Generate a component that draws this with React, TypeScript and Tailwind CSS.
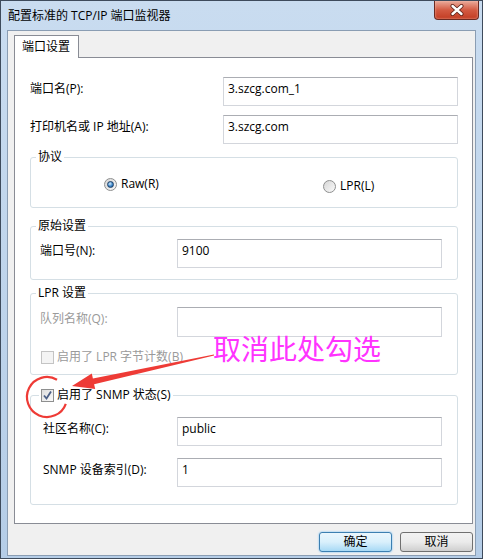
function TextBox({ value, h = "h-[29px]" }: { value?: string; h?: string }) {
  return (
    <div
      className={`${h} flex-1 border border-[#d3d6dc] border-t-[#abadb3] bg-white pl-[4px] pt-[4px] text-[12px] leading-[14px] text-black`}
    >
      {value}
    </div>
  );
}

function CheckBox({ checked, disabled }: { checked?: boolean; disabled?: boolean }) {
  return (
    <span
      className={`flex h-[13px] w-[13px] shrink-0 items-center justify-center border ${
        disabled ? "border-[#c4c4c4] bg-[#f4f4f4]" : "border-[#8e8f8f] bg-linear-to-br from-[#dcdcdc] to-[#fbfbfb]"
      }`}
    >
      {checked && (
        <svg width="11" height="11" viewBox="0 0 11 11">
          <path d="M2 5.5 L4.5 8.5 L9 1.5" fill="none" stroke="#4b5f86" strokeWidth="1.8" />
        </svg>
      )}
    </span>
  );
}

function Radio({ checked }: { checked?: boolean }) {
  return (
    <span className="flex h-[13px] w-[13px] shrink-0 items-center justify-center rounded-full border border-[#8e8f8f] bg-linear-to-br from-[#d6d6d6] to-[#fafafa]">
      {checked && (
        <span className="h-[7px] w-[7px] rounded-full border border-[#1e3f66] bg-[radial-gradient(circle_at_40%_35%,#d6eeff,#3d86c8_55%,#1a4e86)]" />
      )}
    </span>
  );
}

function Legend({ children }: { children: React.ReactNode }) {
  return <legend className="ml-[5px] px-[2px] text-[12px] leading-[14px] text-black">{children}</legend>;
}

function Button({ label, primary }: { label: string; primary?: boolean }) {
  return (
    <div
      className={`flex h-[20px] w-[73px] items-center justify-center rounded-[3px] border text-[12px] leading-[14px] text-black ${
        primary
          ? "border-[#3c7fb1] bg-linear-to-b from-[#eaf6fd] via-[#d9f0fc] to-[#a7d9f5] shadow-[0_0_2px_#5cb6f5]"
          : "border-[#707070] bg-linear-to-b from-[#f2f2f2] via-[#ebebeb] to-[#cfcfcf]"
      }`}
    >
      {label}
    </div>
  );
}

export default function App() {
  return (
    <div className="relative flex h-[559px] w-[483px] flex-col overflow-hidden border border-[#3e4b5c] bg-linear-to-b from-[#c9dcf0] to-[#b5cde7] font-['Open_Sans','Noto_Sans_CJK_SC',sans-serif]">
      {/* title bar */}
      <div className="flex h-[29px] items-start justify-between pl-[7px]">
        <span className="pt-[8px] text-[12px] leading-[14px] text-black">配置标准的 TCP/IP 端口监视器</span>
        <div className="mr-[3px] flex h-[19px] w-[45px] items-center justify-center rounded-b-[4px] border border-t-0 border-[#6b2a22] bg-linear-to-b from-[#e9a99a] via-[#d35a42] to-[#c23b22] shadow-[inset_0_0_2px_#f6c0b0]">
          <svg width="14" height="12" viewBox="0 0 14 12">
            <path d="M2.5 2 L11.5 10 M11.5 2 L2.5 10" stroke="#5a1e14" strokeWidth="4" strokeLinecap="round" />
            <path d="M2.5 2 L11.5 10 M11.5 2 L2.5 10" stroke="#ffffff" strokeWidth="2.4" strokeLinecap="round" />
          </svg>
        </div>
      </div>

      {/* client area */}
      <div className="mx-[6px] mb-[2px] flex flex-1 flex-col border border-[#8a9db3] bg-[#f0f0f0] pl-[6px] pt-[4px]">
        <div className="relative z-10 -mb-px flex h-[23px] w-[65px] border border-b-0 border-[#898c95] bg-white pl-[7px] pt-[4px] text-[12px] leading-[14px] text-black">
          端口设置
        </div>
        <div className="flex h-[467px] w-[459px] flex-col border border-[#898c95] bg-white pl-[15px] pr-[14px] pt-[19px] text-[12px] leading-[14px] text-black">
          <div className="flex items-start">
            <div className="w-[193px] pt-[5px]">端口名(P):</div>
            <TextBox value="3.szcg.com_1" />
          </div>
          <div className="mt-[9px] flex items-start">
            <div className="w-[193px] pt-[5px]">打印机名或 IP 地址(A):</div>
            <TextBox value="3.szcg.com" />
          </div>

          <fieldset className="mt-[6px] h-[58px] rounded-[3px] border border-[#d5dfe5]">
            <Legend>协议</Legend>
            <div className="mt-[12px] flex h-[16px] items-center pl-[73px]">
              <div className="flex w-[219px] items-center gap-[4px]">
                <Radio checked />
                <span>Raw(R)</span>
              </div>
              <div className="mt-[4px] flex items-center gap-[4px]">
                <Radio />
                <span>LPR(L)</span>
              </div>
            </div>
          </fieldset>

          <fieldset className="mt-[11px] h-[61px] rounded-[3px] border border-[#d5dfe5]">
            <Legend>原始设置</Legend>
            <div className="mt-[6px] flex items-start pl-[9px] pr-[15px]">
              <div className="w-[137px] pt-[5px]">端口号(N):</div>
              <TextBox value="9100" />
            </div>
          </fieldset>

          <fieldset className="mt-[6px] h-[89px] rounded-[3px] border border-[#d5dfe5]">
            <Legend>LPR 设置</Legend>
            <div className="mt-[7px] flex items-start pl-[9px] pr-[15px]">
              <div className="w-[137px] pt-[5px] text-[#9a9a9a]">队列名称(Q):</div>
              <TextBox h="h-[30px]" />
            </div>
            <div className="mt-[13px] flex h-[14px] items-center gap-[3px] pl-[10px] text-[#9a9a9a]">
              <CheckBox disabled />
              <span>启用了 LPR 字节计数(B)</span>
            </div>
          </fieldset>

          <fieldset className="mt-[13px] h-[117px] rounded-[3px] border border-[#d5dfe5]">
            <legend className="ml-[8px] flex h-[14px] items-center gap-[3px] px-[2px] text-[12px] leading-[14px]">
              <CheckBox checked />
              <span>启用了 SNMP 状态(S)</span>
            </legend>
            <div className="mt-[15px] flex items-start pl-[12px] pr-[15px]">
              <div className="w-[134px] pt-[5px]">社区名称(C):</div>
              <TextBox value="public" />
            </div>
            <div className="mt-[12px] flex items-start pl-[12px] pr-[15px]">
              <div className="w-[134px] pt-[5px]">SNMP 设备索引(D):</div>
              <TextBox value="1" />
            </div>
          </fieldset>
        </div>

        <div className="mt-[8px] flex w-[459px] justify-end gap-[8px]">
          <Button label="确定" primary />
          <Button label="取消" />
        </div>
      </div>

      {/* annotation overlay */}
      <svg className="pointer-events-none absolute left-[-1px] top-[-1px]" width="483" height="559" viewBox="0 0 483 559">
        <polygon
          points="213.9,354.4 92.9,378.4 91.8,373.5 72,386 95.2,389.1 94.1,384.2 214.1,355.6"
          fill="#ee3b36"
        />
        <path d="M 65.8 403.8 A 20 20 0 1 1 57 379.7" fill="none" stroke="#ee3b36" strokeWidth="2.2" />
      </svg>
      <span className="pointer-events-none absolute left-[212px] top-[333px] text-[28px] leading-none text-[#ff33ff] font-['Noto_Sans_CJK_SC',sans-serif]">
        取消此处勾选
      </span>
    </div>
  );
}
